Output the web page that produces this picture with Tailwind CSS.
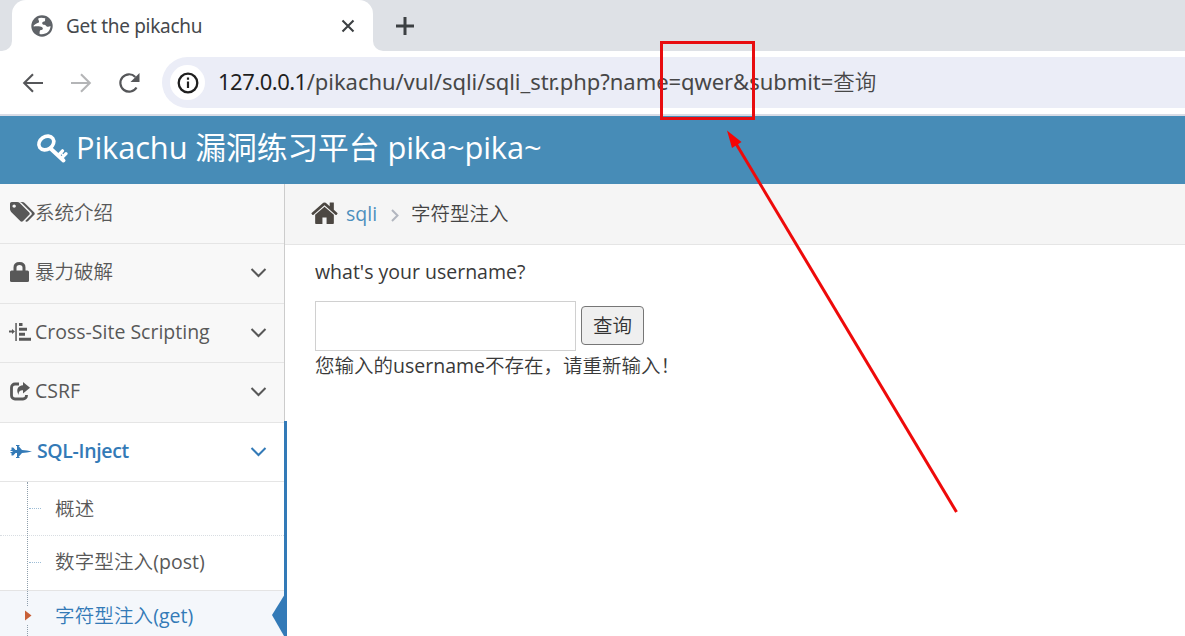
<!DOCTYPE html>
<html lang="zh-CN">
<head>
<meta charset="utf-8">
<title>Get the pikachu</title>
<script src="https://cdn.jsdelivr.net/npm/@tailwindcss/browser@4"></script>
</head>
<body class="relative h-[636px] w-[1185px] overflow-hidden bg-white font-['Open_Sans','Noto_Sans_CJK_SC',sans-serif] text-[19.5px] text-[#393939]">
<!-- Tab strip -->
<div class="flex h-[51px] bg-[#dee1e6]">
  <div class="w-3 bg-white"><div class="h-full rounded-br-[10px] bg-[#dee1e6]"></div></div>
  <div class="flex w-[361px] items-center rounded-t-[14px] bg-white pl-[19px] pr-[18px]">
    <svg class="size-[22px] shrink-0" viewBox="0 0 22 22"><circle cx="11" cy="11" r="10.700" fill="#5f6368"/><path d="M2.600 11.500c2.600-.5 6.900-.6 8.500.8 1.500 1.400.5 2.700-1 2.800-1.700.1-1.400 1.600-1.500 3.900 5.900 1.200 10.900-2.500 10.900-8-1.900 1.100-3.900.9-4.700-.5-.6-1.100-2.300-.2-3.200-1.200-1-1.200-.2-2.300 1.200-2.700 1-.3 1.500-.8 1.300-1.700-.1-.8 0-1.200.3-1.600C11 2.400 9 2.500 7.500 3.200 6.500 4.500 8.500 5.500 8 7c-.4 1.300-2.300 1-3.300 2-.5.5-1.500.7-2 1.500z" fill="#fff"/></svg>
    <span class="ml-[13px] whitespace-nowrap pt-[2px] font-['Noto_Sans',sans-serif] text-[19px] tracking-[-0.3px] text-[#45484c]">Get the pikachu</span>
    <svg class="ml-auto size-[14px]" viewBox="0 0 14 14" stroke="#3c4043" stroke-width="2.100"><path d="M1.500 1.500l11 11M12.500 1.500l-11 11"/></svg>
  </div>
  <div class="flex flex-1 items-center bg-white"><div class="flex h-full flex-1 items-center rounded-bl-[10px] bg-[#dee1e6] pl-[23px]">
    <svg class="size-[18px]" viewBox="0 0 18 18" stroke="#3c4043" stroke-width="3"><path d="M9 0v18M0 9h18"/></svg></div></div>
</div>
<!-- Toolbar -->
<div class="flex h-[65px] items-center border-b-2 border-[#d9dce6] pl-[22px]">
  <svg class="h-[20px] w-[22px]" viewBox="0 0 22 20" fill="none" stroke="#555659" stroke-width="2.100"><path d="M21 10H2.500M11 1.200L2.200 10l8.800 8.800"/></svg>
  <svg class="ml-[26px] h-[20px] w-[22px]" viewBox="0 0 22 20" fill="none" stroke="#b4b5b7" stroke-width="2.100"><path d="M1 10h18.500M11 1.200l8.800 8.800-8.800 8.800"/></svg>
  <svg class="ml-[26px] size-[22px]" viewBox="0 0 22 22"><path d="M18.500 15.500A8.700 8.700 0 1 1 17.300 4.900" fill="none" stroke="#555659" stroke-width="2.200"/><path d="M21.500 1v9h-9z" fill="#555659"/></svg>
  <div class="ml-[22px] flex h-[51px] flex-1 items-center rounded-l-full bg-[#ebedf7] pl-2">
    <div class="flex size-[35px] items-center justify-center rounded-full bg-white"><svg class="size-[22px]" viewBox="0 0 22 22"><circle cx="11" cy="11" r="9.300" fill="none" stroke="#1f1f1f" stroke-width="2.300"/><path d="M11 9.500v6.500M11 5.500v2.200" stroke="#1f1f1f" stroke-width="2.200"/></svg></div>
    <span class="ml-[13px] whitespace-nowrap pb-px font-['Noto_Sans','Noto_Sans_CJK_SC',sans-serif] text-[22px] tracking-[-0.06px] text-[#474747]"><span class="tracking-[-0.5px] text-[#1f1f1f]">127.0.0.1</span>/pikachu/vul/sqli/sqli_str.php?name=qwer&amp;submit=<span class="text-[21.500px] font-[350] tracking-normal">查询</span></span>
  </div>
</div>
<!-- Application header -->
<header class="flex h-[68px] items-center bg-[#478cb7] pl-9 text-white">
  <svg class="mb-[4px] h-[31px] w-[32px]" viewBox="0 0 32 31" fill="none" stroke="#fff"><ellipse cx="10.300" cy="10" rx="8" ry="6.300" stroke-width="3.600" transform="rotate(-35 10.300 10)"/><path d="M14.500 15.500L27.500 27.500" stroke-width="4" stroke-linecap="round"/><path d="M22.500 22l4-4.200M26.300 24.500l3.700-3.800" stroke-width="3.200" stroke-linecap="round"/><path d="M24.500 19.500l4 4" stroke-width="1.500"/></svg>
  <span class="ml-[8px] whitespace-nowrap pb-[7px] text-[30.800px] leading-[40px] tracking-[-0.1px]">Pikachu 漏洞练习平台 pika~pika~</span>
</header>
<div class="flex h-[452px]">
  <!-- Sidebar -->
  <nav class="relative w-[285px] shrink-0 border-r border-[#ccc] bg-[#f8f8f8] text-[#585858]">
    <div class="flex h-[60px] items-center border-b border-[#e5e5e5] pl-[10px] pb-[3px]"><svg class="mb-px h-[24px] w-[25px]" viewBox="0 0 1920 1792" fill="#585858"><path d="M448 448q0-53-37.500-90.500t-90.500-37.500-90.500 37.500-37.500 90.500 37.500 90.500 90.500 37.500 90.500-37.500 37.500-90.500zm1067 576q0 53-37 90l-491 492q-39 37-91 37-53 0-90-37l-715-716q-38-37-64.500-101t-26.500-117v-416q0-52 38-90t90-38h416q53 0 117 26.500t102 64.500l715 714q37 39 37 91zm384 0q0 53-37 90l-491 492q-39 37-91 37-36 0-59-14t-53-45l470-470q37-37 37-90 0-52-37-91l-715-714q-38-38-102-64.500t-117-26.500h224q53 0 117 26.500t102 64.500l715 714q37 39 37 91z"/></svg><span class="pt-[2px] font-[350]">系统介绍</span></div>
    <div class="flex h-[60px] items-center border-b border-[#e5e5e5] pl-[10px] pr-[17px] pb-[3px]"><svg class="mb-px h-[20px] w-[19px]" viewBox="0 0 19 20"><rect y="8.500" width="19" height="11.500" rx="1.500" fill="#585858"/><path d="M5 9V5.500Q5 1.500 9.500 1.500T14 5.500V9" fill="none" stroke="#585858" stroke-width="3"/></svg><span class="ml-[6px] font-[350]">暴力破解</span><svg class="ml-auto mt-[2px] h-[12px] w-[17px]" viewBox="0 0 17 12" fill="none" stroke="#585858" stroke-width="2"><path d="M1.500 2l7 7 7-7"/></svg></div>
    <div class="flex h-[59px] items-center border-b border-[#e5e5e5] pl-[9px] pr-[17px] pb-[2px]"><svg class="mb-px h-[20px] w-[22px]" viewBox="0 0 22 20" fill="#585858"><path d="M0 8.500h3V7l3 2.500L3 12v-1.500H0zM6.300 1h1.500v18H6.300zM10 1h3.500v3H10zM10 5.800h8v3h-8zM10 10.800h6v3h-6zM10 15.800h12v3H10z"/></svg><span class="ml-1 whitespace-nowrap">Cross-Site Scripting</span><svg class="ml-auto mt-[2px] h-[12px] w-[17px]" viewBox="0 0 17 12" fill="none" stroke="#585858" stroke-width="2"><path d="M1.500 2l7 7 7-7"/></svg></div>
    <div class="flex h-[60px] items-center border-b border-[#e5e5e5] pl-[10px] pr-[17px] pb-[3px]"><svg class="h-[19px] w-[20px]" viewBox="0 0 20 19" fill="none" stroke="#585858" stroke-width="2.800"><path d="M9 2H5a3.500 3.500 0 0 0-3.500 3.500v8A3.500 3.500 0 0 0 5 17h8a3.500 3.500 0 0 0 3.500-3.500V13"/><path d="M13 0l7 5.800-7 5.700V8.300c-3 0-4.500 1.200-4.300 4.700C5.500 8 8 3.500 13 3.300z" fill="#585858" stroke="none"/></svg><span class="ml-[5px]">CSRF</span><svg class="ml-auto mt-[2px] h-[12px] w-[17px]" viewBox="0 0 17 12" fill="none" stroke="#585858" stroke-width="2"><path d="M1.500 2l7 7 7-7"/></svg></div>
    <div class="flex h-[59px] items-center border-b border-[#e5e5e5] bg-white pl-[10px] pr-[17px] pb-[2px] text-[#337ab7]"><svg class="h-[15px] w-[22px]" viewBox="0 0 22 15" fill="#337ab7"><path d="M1.500 3.500h1.700L5.500 6H7V2H6V1h3.500v1h-1l3.500 4 5 .5 5 1-5 1-5 .5-3.500 4h1v1H6v-1h1V9H5.500l-2.300 2.500H1.500V9H.5V8h2V7h-2V6h1z"/></svg><span class="ml-[5px] whitespace-nowrap font-semibold tracking-[-0.35px]">SQL-Inject</span><svg class="ml-auto mt-[2px] h-[12px] w-[17px]" viewBox="0 0 17 12" fill="none" stroke="#337ab7" stroke-width="2"><path d="M1.500 2l7 7 7-7"/></svg></div>
    <div class="bg-white font-[350] tracking-[0.15px]">
      <div class="flex h-[54px] items-center border-b border-dotted border-[#d8dde2] pl-[29px]"><i class="w-[12px] border-t border-dotted border-[#9dbdd6]"></i><span class="ml-[14px]">概述</span></div>
      <div class="flex h-[55px] items-center border-b border-[#e4e4e4] pb-[2px] pl-[29px]"><i class="w-[12px] border-t border-dotted border-[#9dbdd6]"></i><span class="ml-[14px] whitespace-nowrap">数字型注入<span class="font-normal tracking-normal">(post)</span></span></div>
      <div class="flex h-[54px] items-center bg-[#f4f7fb] pb-[4px] pl-[55px] text-[#337ab7]"><span class="whitespace-nowrap">字符型注入<span class="font-normal tracking-normal">(get)</span></span></div>
    </div>
    <!-- Tree guide and active-item markers -->
    <i class="absolute left-[27px] top-[298px] h-[154px] border-l border-dotted border-[#8f9fac]"></i>
    <svg class="absolute left-[24px] top-[423px] h-[18px] w-[8px]" viewBox="0 0 8 18"><path d="M0 0h8v18H0z" fill="#f4f7fb"/><path d="M1 3.500l6.500 5-6.500 5z" fill="#c86139"/></svg>
    <i class="absolute left-[284px] top-[237px] h-[215px] w-[3px] bg-[#337ab7]"></i>
    <svg class="absolute left-[272px] top-[410px] h-[42px] w-[13px]" viewBox="0 0 13 42"><path d="M13 0v42h-1L0 21z" fill="#337ab7"/></svg>
  </nav>
  <!-- Main content -->
  <main class="flex-1">
    <div class="flex h-[61px] items-center border-b border-[#e5e5e5] bg-[#f5f5f5] pl-[26px]">
      <svg class="mb-[2px] h-[22px] w-[27px] overflow-visible" viewBox="64 230 1664 1306" preserveAspectRatio="none" fill="#4c4742"><path d="M1472 992v480q0 26-19 45t-45 19h-384v-384h-256v384h-384q-26 0-45-19t-19-45v-480q0-1 .5-3t.5-3l575-474 575 474q1 2 1 6zm223-69l-62 74q-8 9-21 11h-3q-13 0-21-7l-692-577-692 577q-12 8-24 7-13-2-21-11l-62-74q-8-10-7-23.500t11-21.500l719-599q32-26 76-26t76 26l244 204v-195q0-14 9-23t23-9h192q14 0 23 9t9 23v408l219 182q10 8 11 21.500t-7 23.500z"/></svg>
      <span class="ml-2 text-[#4c8fbd]">sqli</span>
      <svg class="ml-[14px] mt-[2px] h-[13px] w-[8px]" viewBox="0 0 8 13" fill="none" stroke="#b2b6bf" stroke-width="2"><path d="M1 1l5.500 5.500L1 12"/></svg>
      <span class="ml-[12px] font-[350] text-[#444]">字符型注入</span>
    </div>
    <div class="pl-[30px] pt-[12px]">
      <p class="h-[44px] leading-[30px]">what's your username?</p>
      <div class="flex items-start gap-[5px]"><input class="h-[50px] w-[261px] border border-[#d0d0d0] bg-white outline-none"><button class="mt-[5px] h-[39px] w-[63px] rounded-[4px] border border-[#767676] bg-[#efefef] font-[350] text-[#333]">查询</button></div>
      <p class="whitespace-nowrap leading-[30px]"><span class="font-[350]">您输入的</span>username<span class="font-[350]">不存在，请重新输入！</span></p>
    </div>
  </main>
</div>
<!-- Annotation box and arrow -->
<svg class="absolute left-0 top-0 h-[636px] w-[1185px]" viewBox="0 0 1185 636"><rect x="661.500" y="42.500" width="92" height="76" fill="none" stroke="#e80c10" stroke-width="3"/><path d="M956.500 512L735 142" stroke="#ee0a0a" stroke-width="3"/><path d="M727 130.500l14.500 11.500-9.500 6z" fill="#f50505"/></svg>
</body>
</html>
